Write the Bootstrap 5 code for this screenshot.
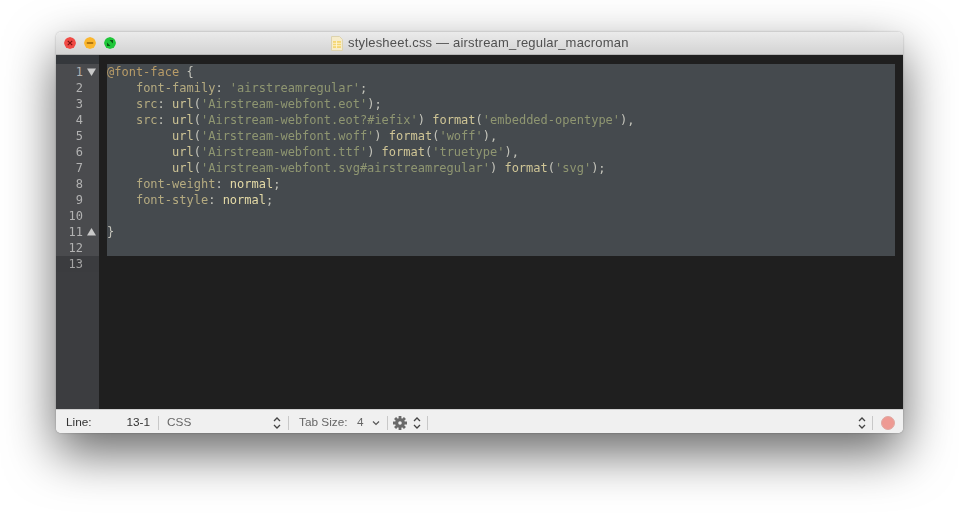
<!DOCTYPE html>
<html lang="en">
<head>
<meta charset="utf-8">
<title>stylesheet.css</title>
<link href="https://cdn.jsdelivr.net/npm/bootstrap@5.3.0/dist/css/bootstrap.min.css" rel="stylesheet">
<style>
html,body{height:514px;overflow:hidden;background:#fff}
.win-outer{width:847px;height:401px;margin:32px 0 0 56px;border-radius:5px;box-shadow:0 20px 50px rgba(0,0,0,.6),0 0 2px rgba(0,0,0,.3)}
.win{height:401px;border-radius:5px;overflow:hidden;font-family:"Liberation Sans",sans-serif;filter:blur(.42px)}
.tbar{height:23px;background:linear-gradient(#ebebeb,#d3d3d3);border-bottom:1px solid #b4b4b4;position:relative;flex:none}
.light{width:12px;height:12px;border-radius:50%}
.lights{padding-left:8px;gap:8px}
.ttl{font-size:13px;color:#505050;gap:5px;letter-spacing:.19px;left:275px}
.edit{height:354px;background:#1f1f1f;flex:none}
.gut{width:43px;background:#3c3d40;color:#b2b2b2;font:12px/16px "DejaVu Sans Mono",monospace;padding-top:9px;flex:none;box-shadow:inset 0 9px 0 #35383c}
.gut-row{height:16px;background:#4a4b4e}
.gut-row.cur{background:#3b3c3f;color:#a4a4a4}
.gut-num{width:27px;text-align:right}
.code{font:12px/16px "DejaVu Sans Mono",monospace;padding:9px 0 0 8px}
.sel{width:788px;height:192px;background:#454a4e}
.cd-l{height:16px;white-space:pre}
.k{color:#b5ab80}.s{color:#8f9671}.f{color:#cfc596}.v{color:#e4daa6}.p{color:#c4c4bb}.a{color:#b89c68}
.sbar{height:24px;background:#f0f0f0;font-size:11.8px;color:#333;border-top:1px solid #d0d0d0;flex:none;padding-top:2px}
.sep{width:1px;height:14px;background:#c8c8c8;flex:none}
.dim{color:#666}
.w-line{width:60px;margin-left:10px;flex:none}
.w-pos{width:24px;text-align:right;flex:none}
.w-css{width:106px;flex:none}
.w-tab{width:58px;flex:none}
.w-four{width:15px;flex:none}
.sep-a{margin:0 10px 0 7px}
.sep-b{margin:0 5px 0 7px}
.sep-c{margin-left:6px}
.sep-d{margin:0 8px 0 6px}
.chev-g{margin-left:6px}
.rec{width:14px;height:14px;background:#ee9a93;margin-right:8px;border:1px solid #dfa9a3}
</style>
</head>
<body>
<div class="win-outer">
<div class="win d-flex flex-column">
 <div class="tbar d-flex align-items-center">
  <div class="lights d-flex">
   <svg class="light" viewBox="0 0 12 12"><circle cx="6" cy="6" r="6" fill="#f04a45"/><path d="M3.8 3.8l4.4 4.4M8.2 3.8l-4.4 4.4" stroke="#7d1210" stroke-width="1.2"/></svg>
   <svg class="light" viewBox="0 0 12 12"><circle cx="6" cy="6" r="6" fill="#fbb62c"/><path d="M2.8 6h6.4" stroke="#98620a" stroke-width="1.3"/></svg>
   <svg class="light" viewBox="0 0 12 12"><circle cx="6" cy="6" r="6" fill="#1fc639"/><path d="M3 9V5.5L6.5 9zM9 3v3.5L5.5 3z" fill="#0a5c14"/></svg>
  </div>
  <div class="ttl position-absolute top-0 bottom-0 d-flex align-items-center">
   <svg width="12" height="15" viewBox="0 0 12 15"><path d="M.5.5h8l3 3v11H.5z" fill="#f6eccb" stroke="#ddd3ae"/><path d="M2 5h8v7H2z" fill="#f4d673"/><path d="M2 7.3h8M2 9.7h8M5.5 5v7" stroke="#fff6d8" stroke-width=".8"/></svg>
   <span>stylesheet.css — airstream_regular_macroman</span>
  </div>
 </div>
 <div class="edit d-flex">
  <div class="gut">
   <div class="gut-row d-flex align-items-center"><span class="gut-num">1</span><svg class="ms-1" width="9" height="8" viewBox="0 0 9 8"><path d="M0 .5h9L4.5 8z" fill="#c9c9c9"/></svg></div>
   <div class="gut-row d-flex"><span class="gut-num">2</span></div>
   <div class="gut-row d-flex"><span class="gut-num">3</span></div>
   <div class="gut-row d-flex"><span class="gut-num">4</span></div>
   <div class="gut-row d-flex"><span class="gut-num">5</span></div>
   <div class="gut-row d-flex"><span class="gut-num">6</span></div>
   <div class="gut-row d-flex"><span class="gut-num">7</span></div>
   <div class="gut-row d-flex"><span class="gut-num">8</span></div>
   <div class="gut-row d-flex"><span class="gut-num">9</span></div>
   <div class="gut-row d-flex"><span class="gut-num">10</span></div>
   <div class="gut-row d-flex align-items-center"><span class="gut-num">11</span><svg class="ms-1" width="9" height="8" viewBox="0 0 9 8"><path d="M0 7.5h9L4.5 0z" fill="#c9c9c9"/></svg></div>
   <div class="gut-row d-flex"><span class="gut-num">12</span></div>
   <div class="gut-row cur d-flex"><span class="gut-num">13</span></div>
  </div>
  <div class="code">
   <div class="sel">
    <div class="cd-l"><span class="a">@font-face</span> <span class="p">{</span></div>
    <div class="cd-l">    <span class="k">font-family</span><span class="p">:</span> <span class="s">'airstreamregular'</span><span class="p">;</span></div>
    <div class="cd-l">    <span class="k">src</span><span class="p">:</span> <span class="f">url</span><span class="p">(</span><span class="s">'Airstream-webfont.eot'</span><span class="p">);</span></div>
    <div class="cd-l">    <span class="k">src</span><span class="p">:</span> <span class="f">url</span><span class="p">(</span><span class="s">'Airstream-webfont.eot?#iefix'</span><span class="p">)</span> <span class="f">format</span><span class="p">(</span><span class="s">'embedded-opentype'</span><span class="p">),</span></div>
    <div class="cd-l">         <span class="f">url</span><span class="p">(</span><span class="s">'Airstream-webfont.woff'</span><span class="p">)</span> <span class="f">format</span><span class="p">(</span><span class="s">'woff'</span><span class="p">),</span></div>
    <div class="cd-l">         <span class="f">url</span><span class="p">(</span><span class="s">'Airstream-webfont.ttf'</span><span class="p">)</span> <span class="f">format</span><span class="p">(</span><span class="s">'truetype'</span><span class="p">),</span></div>
    <div class="cd-l">         <span class="f">url</span><span class="p">(</span><span class="s">'Airstream-webfont.svg#airstreamregular'</span><span class="p">)</span> <span class="f">format</span><span class="p">(</span><span class="s">'svg'</span><span class="p">);</span></div>
    <div class="cd-l">    <span class="k">font-weight</span><span class="p">:</span> <span class="v">normal</span><span class="p">;</span></div>
    <div class="cd-l">    <span class="k">font-style</span><span class="p">:</span> <span class="v">normal</span><span class="p">;</span></div>
    <div class="cd-l"></div>
    <div class="cd-l"><span class="p">}</span></div>
    <div class="cd-l"></div>
   </div>
  </div>
 </div>
 <div class="sbar d-flex align-items-center">
  <span class="w-line">Line:</span>
  <span class="w-pos">13-1</span>
  <span class="sep mx-2"></span>
  <span class="dim w-css">CSS</span>
  <svg width="8" height="14" viewBox="0 0 8 14"><path d="M1 5l3-3 3 3M1 9l3 3 3-3" fill="none" stroke="#444" stroke-width="1.3"/></svg>
  <span class="sep sep-a"></span>
  <span class="dim w-tab">Tab Size:</span>
  <span class="dim w-four">4</span>
  <svg width="8" height="6" viewBox="0 0 8 6"><path d="M1 1.5l3 3 3-3" fill="none" stroke="#555" stroke-width="1.2"/></svg>
  <span class="sep sep-b"></span>
  <svg width="14" height="14" viewBox="0 0 15 15"><g fill="#6a6a6a"><circle cx="7.5" cy="7.5" r="5.2"/><path d="M6 0h3v15H6zM0 6h15v3H0z"/><path d="M6 0h3v15H6zM0 6h15v3H0z" transform="rotate(45 7.5 7.5)"/></g><circle cx="7.5" cy="7.5" r="1.9" fill="#f0f0f0"/></svg>
  <svg class="chev-g" width="8" height="14" viewBox="0 0 8 14"><path d="M1 5l3-3 3 3M1 9l3 3 3-3" fill="none" stroke="#444" stroke-width="1.3"/></svg>
  <span class="sep sep-c"></span>
  <svg class="ms-auto" width="8" height="14" viewBox="0 0 8 14"><path d="M1 5l3-3 3 3M1 9l3 3 3-3" fill="none" stroke="#444" stroke-width="1.3"/></svg>
  <span class="sep sep-d"></span>
  <span class="light rec"></span>
 </div>
</div>
</div>
<script src="https://cdn.jsdelivr.net/npm/bootstrap@5.3.0/dist/js/bootstrap.bundle.min.js"></script>
</body>
</html>
